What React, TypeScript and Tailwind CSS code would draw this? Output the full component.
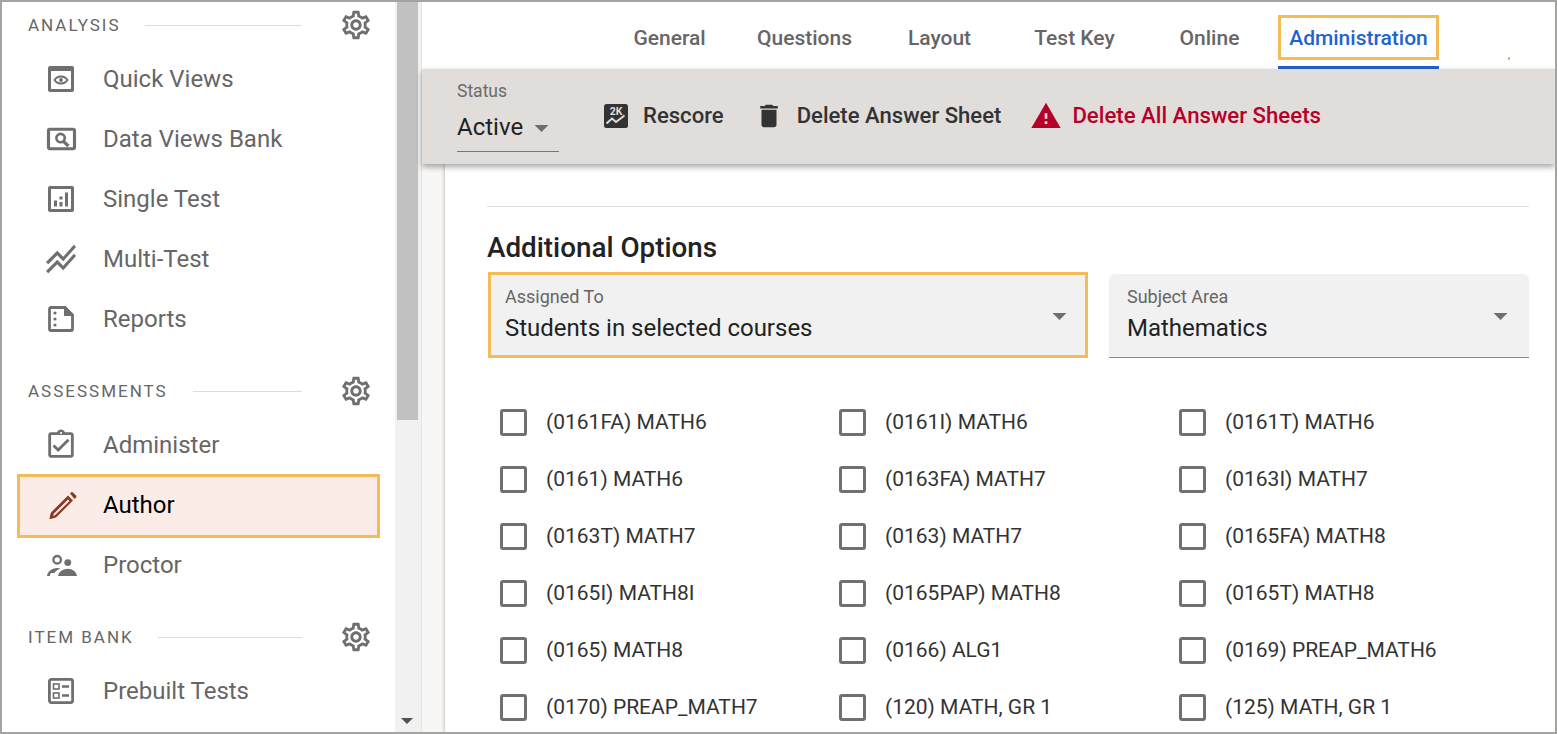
import {
  MdDelete,
  MdOutlineAssignmentTurnedIn,
  MdOutlineSettings,
  MdStackedLineChart,
  MdWarning,
} from "react-icons/md"

const QuickViewsIcon = () => (
  <svg viewBox="0 0 28 28" className="size-[28px] text-[#6f6f6f]" fill="currentColor">
    <path d="M3 1h22a2 2 0 0 1 2 2v22a2 2 0 0 1-2 2H3a2 2 0 0 1-2-2V3a2 2 0 0 1 2-2zm1 5v18h20V6z" fillRule="evenodd" />
    <path d="M14 10.500c3.600 0 6.300 2 7.600 4.500-1.300 2.500-4 4.500-7.600 4.500S7.700 17.500 6.400 15c1.300-2.500 4-4.500 7.600-4.500zm0 2c-2.300 0-4.300 1-5.400 2.500 1.100 1.500 3.100 2.500 5.400 2.500s4.300-1 5.400-2.500c-1.100-1.500-3.100-2.500-5.400-2.500z" fillRule="evenodd" />
    <circle cx="14" cy="15" r="1.900" />
  </svg>
)

const DataBankIcon = () => (
  <svg viewBox="0 0 32 28" className="h-[26px] w-[31px] text-[#6f6f6f]" fill="none" stroke="currentColor">
    <rect x="2" y="3.500" width="28" height="21" rx="1.500" strokeWidth="3.400" />
    <circle cx="15" cy="13" r="4.500" strokeWidth="2.800" />
    <path d="M18 16.500l5.500 5" strokeWidth="3.400" />
  </svg>
)

const SingleTestIcon = () => (
  <svg viewBox="0 0 28 28" className="size-[28px] text-[#6f6f6f]" fill="currentColor">
    <path d="M3 1h22a2 2 0 0 1 2 2v22a2 2 0 0 1-2 2H3a2 2 0 0 1-2-2V3a2 2 0 0 1 2-2zm1 3v20h20V4z" fillRule="evenodd" />
    <path d="M7 15.500h3v6H7zM12.500 11.500h3v3h-3zM12.500 17h3v4.500h-3zM18 7.500h3v14h-3z" />
  </svg>
)

const ReportsIcon = () => (
  <svg viewBox="0 0 28 28" className="size-[28px] text-[#6f6f6f]" fill="currentColor">
    <path d="M3.500 2.500H18L25.500 10v14a1.500 1.500 0 0 1-1.500 1.500H4A1.500 1.500 0 0 1 2.500 24V4a1.500 1.500 0 0 1 1-1.500z" fill="none" stroke="currentColor" strokeWidth="2.800" />
    <path d="M17 1.500h1.500l8 8V11H17z" />
    <circle cx="8" cy="8" r="1.600" />
    <circle cx="8" cy="14" r="1.600" />
    <circle cx="8" cy="20" r="1.600" />
  </svg>
)

const PencilIcon = () => (
  <svg viewBox="0 0 30 30" className="size-[30px] text-[#8a3a21]" fill="currentColor">
    <path d="M22 3.500l1-1a1.500 1.500 0 0 1 2 0l3 3a1.500 1.500 0 0 1 0 2l-1.500 1.500z" />
    <path d="M20 5.500l5 5L8 27.500l-6.500 1.500L3 22.500zM20 9.500L5.700 23.800l-.7 2 2-.5L21.500 11z" fillRule="evenodd" />
    <path d="M1.500 29l1.200-5 3.800 3.800z" />
  </svg>
)

const ProctorIcon = () => (
  <svg viewBox="0 0 32 26" className="h-[25px] w-[31px] text-[#6f6f6f]" fill="currentColor">
    <circle cx="11.500" cy="7" r="3.900" fill="none" stroke="currentColor" strokeWidth="2.400" />
    <circle cx="22.500" cy="10" r="3.600" />
    <path d="M1 24c0-4.500 5-8.500 10.500-8.500 1.300 0 2.500.2 3.500.5-3 1.200-5.200 2.600-6.300 4.700H5.500c-.9 0-1.500 1.200-1.500 3.300z" />
    <path d="M12.500 24c0-4.200 5.500-7.500 10-7.500s9.500 3.300 9.500 7.500z" />
  </svg>
)

const PrebuiltIcon = () => (
  <svg viewBox="0 0 28 28" className="size-[28px] text-[#6f6f6f]" fill="none" stroke="currentColor">
    <rect x="2.400" y="2.400" width="23.200" height="23.200" rx="2" strokeWidth="2.800" />
    <rect x="6.500" y="7" width="5.500" height="5" strokeWidth="1.600" />
    <rect x="6.500" y="16" width="5.500" height="5" strokeWidth="1.600" />
    <path d="M15 9.500h7M15 18.500h7" strokeWidth="2.400" />
  </svg>
)

const RescoreIcon = () => (
  <svg viewBox="0 0 26 26" className="size-[26px]">
    <rect x="1" y="1" width="24" height="24" rx="2.500" fill="#333333" />
    <text x="13" y="11.500" textAnchor="middle" fontSize="10.500" fontWeight="700" fontFamily="Roboto, sans-serif" fill="#e0dddb">2K</text>
    <path d="M3.500 20.500l5.500-5 4 3.500 8.500-6.500" fill="none" stroke="#e0dddb" strokeWidth="2" />
  </svg>
)

function Caret({ className }: { className: string }) {
  return (
    <svg viewBox="0 0 14 7" className={className} fill="currentColor">
      <path d="M0 0h14L7 7z" />
    </svg>
  )
}

function NavRow({ icon, label }: { icon: React.ReactNode; label: string }) {
  return (
    <div className="flex h-[60px] items-center">
      <div className="flex w-[101px] justify-center pl-[17px]">{icon}</div>
      <span className="text-[24px] leading-none text-[#666666]">{label}</span>
    </div>
  )
}

function SectionHeader({ title, lineWidth }: { title: string; lineWidth: string }) {
  return (
    <div className="mb-px flex h-[46px] items-center pl-[26px] pr-[22px]">
      <span className="mt-[2px] text-[17px] tracking-[2px] text-[#666666]">{title}</span>
      <div className="ml-auto h-px bg-[#dcdcdc]" style={{ width: lineWidth }} />
      <MdOutlineSettings className="ml-[37px] size-[34px] text-[#6f6f6f]" />
    </div>
  )
}

const courses = [
  "(0161FA) MATH6",
  "(0161I) MATH6",
  "(0161T) MATH6",
  "(0161) MATH6",
  "(0163FA) MATH7",
  "(0163I) MATH7",
  "(0163T) MATH7",
  "(0163) MATH7",
  "(0165FA) MATH8",
  "(0165I) MATH8I",
  "(0165PAP) MATH8",
  "(0165T) MATH8",
  "(0165) MATH8",
  "(0166) ALG1",
  "(0169) PREAP_MATH6",
  "(0170) PREAP_MATH7",
  "(120) MATH, GR 1",
  "(125) MATH, GR 1",
]

const tabs = ["General", "Questions", "Layout", "Test Key", "Online"]

export default function App() {
  return (
    <div className="flex h-[734px] w-[1557px] overflow-hidden border-2 border-[#a3a3a1] bg-white font-['Roboto',sans-serif]">
      <aside className="w-[393px] shrink-0 bg-white">
        <SectionHeader title="ANALYSIS" lineWidth="157px" />
        <NavRow icon={<QuickViewsIcon />} label="Quick Views" />
        <NavRow icon={<DataBankIcon />} label="Data Views Bank" />
        <NavRow icon={<SingleTestIcon />} label="Single Test" />
        <NavRow icon={<MdStackedLineChart className="size-[36px] text-[#6f6f6f]" />} label="Multi-Test" />
        <NavRow icon={<ReportsIcon />} label="Reports" />

        <div className="mt-[19px]">
          <SectionHeader title="ASSESSMENTS" lineWidth="109px" />
        </div>
        <NavRow icon={<MdOutlineAssignmentTurnedIn className="size-[34px] text-[#6f6f6f]" />} label="Administer" />
        <div className="-mb-[3px] -mt-px ml-[15px] flex h-[64px] w-[363px] items-center border-[3px] border-[#f4bc57] bg-[#fcece8] pb-[2px]">
          <div className="flex w-[83px] justify-center pl-[3px]">
            <PencilIcon />
          </div>
          <span className="text-[24px] leading-none text-black">Author</span>
        </div>
        <NavRow icon={<ProctorIcon />} label="Proctor" />

        <div className="mt-[19px]">
          <SectionHeader title="ITEM BANK" lineWidth="144px" />
        </div>
        <NavRow icon={<PrebuiltIcon />} label="Prebuilt Tests" />
      </aside>

      <div className="flex w-[26px] shrink-0 flex-col bg-[#f1f1f1] pb-[8px] pl-[2px]">
        <div className="h-[418px] w-[21px] bg-[#c1c1c1]" />
        <Caret className="ml-[4px] mt-auto h-[6px] w-[12px] text-[#505050]" />
      </div>

      <main className="flex min-w-0 flex-1 flex-col border-l border-[#e4e4e4]">
        <div className="relative flex h-[67px] shrink-0 pl-[180px]">
          {tabs.map((tab) => (
            <div key={tab} className="flex h-[70px] w-[135px] items-center justify-center pt-[4px] text-[21px] font-medium text-[#666666]">
              {tab}
            </div>
          ))}
          <div className="ml-[1px] flex w-[161px] flex-col justify-between pt-[13px]">
            <div className="flex h-[45px] items-center justify-center border-[3px] border-[#f4bc57] pt-[2px] text-[21px] font-medium text-[#1f63cf]">
              Administration
            </div>
            <div className="h-[3px] bg-[#1f63cf]" />
          </div>
          <div className="absolute left-[1086px] top-[55px] h-[3px] w-[2px] bg-[#c8c850]" />
        </div>

        <div className="relative z-10 flex h-[95px] shrink-0 items-center bg-[#e0dddb] pl-[35px] shadow-[0_3px_6px_rgba(0,0,0,0.35)]">
          <div className="-mt-[2px] flex h-[73px] w-[102px] flex-col border-b border-[#777777]">
            <span className="text-[17.500px] leading-[24px] text-[#6b6b6b]">Status</span>
            <div className="mt-[9px] flex items-center gap-[11px] text-[24px] leading-[30px] text-[#222222]">
              Active
              <Caret className="mt-[3px] h-[7px] w-[15px] text-[#6f6f6f]" />
            </div>
          </div>
          <div className="-mt-[1px] ml-[44px] flex items-center">
            <RescoreIcon />
            <span className="ml-[14px] text-[22.100px] font-medium text-[#333333]">Rescore</span>
            <MdDelete className="ml-[30px] size-[30px] text-[#333333]" />
            <span className="ml-[13px] text-[22.100px] font-medium text-[#333333]">Delete Answer Sheet</span>
            <MdWarning className="ml-[29px] size-[32px] text-[#b5002a]" />
            <span className="ml-[10px] text-[22.200px] font-medium text-[#b5002a]">Delete All Answer Sheets</span>
          </div>
        </div>

        <div className="flex min-h-0 flex-1 bg-[#f8f7f6] pl-[23px]">
          <div className="min-w-0 flex-1 bg-white pl-[42px] pr-[26px] pt-[42px] shadow-[-1px_0_3px_rgba(0,0,0,0.2)]">
            <div className="h-px bg-[#dedede]" />
            <h2 className="mt-[24px] text-[27.800px] font-medium leading-[34px] text-[#222222]">Additional Options</h2>
            <div className="mt-[7px] flex items-end gap-[21px] pl-px">
              <div className="relative h-[86px] w-[600px] border-[3px] border-[#f4bc57] bg-[#f1f1f1] pl-[14px] pt-[11px]">
                <div className="text-[18px] leading-[22px] text-[#666666]">Assigned To</div>
                <div className="mt-[5px] text-[24px] leading-[30px] text-[#222222]">Students in selected courses</div>
                <Caret className="absolute right-[18px] top-[38px] h-[7px] w-[15px] text-[#6f6f6f]" />
              </div>
              <div className="relative h-[84px] w-[420px] rounded-t-[6px] border-b border-[#8a8a8a] bg-[#f1f1f1] pl-[18px] pt-[12px]">
                <div className="text-[18px] leading-[22px] text-[#666666]">Subject Area</div>
                <div className="mt-[5px] text-[24px] leading-[30px] text-[#222222]">Mathematics</div>
                <Caret className="absolute right-[21px] top-[39px] h-[7px] w-[15px] text-[#6f6f6f]" />
              </div>
            </div>
            <div className="mt-[36px] grid grid-cols-[339px_340px_1fr] pl-[13px]">
              {courses.map((course) => (
                <div key={course} className="flex h-[57px] items-center">
                  <div className="size-[27px] shrink-0 rounded-[3px] border-[3px] border-[#707070]" />
                  <span className="mb-[1px] ml-[19px] text-[21px] leading-none text-[#333333]">{course}</span>
                </div>
              ))}
            </div>
          </div>
        </div>
      </main>
    </div>
  )
}
